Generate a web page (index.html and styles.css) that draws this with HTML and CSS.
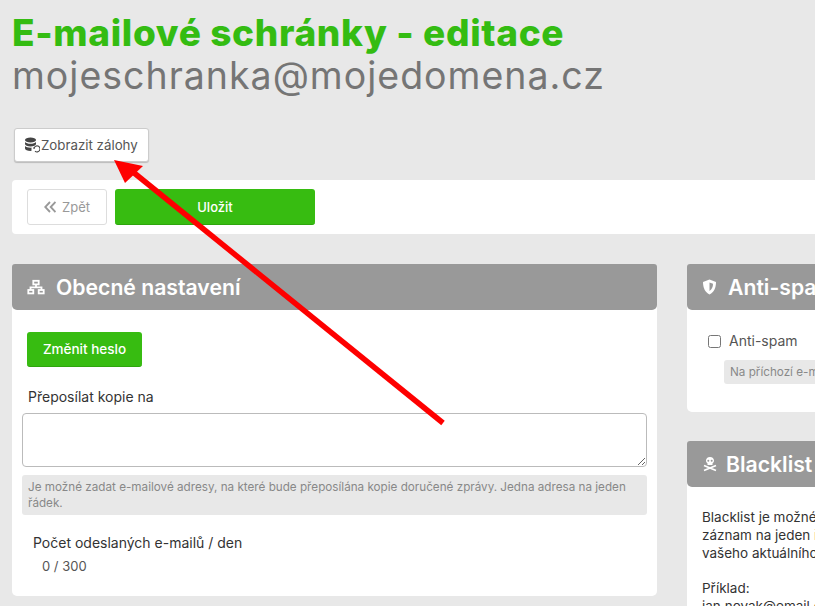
FILE: index.html
```html
<!DOCTYPE html>
<html lang="cs">
<head>
	<meta charset="UTF-8">
	<title>E-mailové schránky - editace</title>
	<link rel="stylesheet" href="styles.css">
</head>
<body>
	<div class="page">
		<h1 class="title">E-mailové schránky - editace</h1>
		<div class="subtitle">mojeschranka@mojedomena.cz</div>

		<div class="tools">
			<button class="btn-tool" type="button">
				<svg class="tool-icon" width="16" height="16" viewBox="0 0 16 16">
					<ellipse cx="6.5" cy="3" rx="5.5" ry="2.4" fill="#444"/>
					<path d="M1 5v2c0 1.3 2.5 2.4 5.5 2.4S12 8.300 12 7V5c-1 1.200-3 1.800-5.500 1.800S2 6.200 1 5z" fill="#444"/>
					<path d="M1 9v2.500c0 1.300 2.500 2.400 5.500 2.400l1-.1V10.600l-1 .1C4 10.700 2 10.200 1 9z" fill="#444"/>
					<path d="M10 11.500a3 3 0 1 1 1 2.700" fill="none" stroke="#444" stroke-width="1.100"/>
					<path d="M8.800 10.500l1.200 1.400 1.300-1.200z" fill="#444"/>
				</svg>
				Zobrazit zálohy
			</button>
		</div>

		<div class="action-bar">
			<button class="btn-back" type="button">
				<svg width="12" height="12" viewBox="0 0 12 12" fill="none" stroke="#999" stroke-width="1.900">
					<path d="M6 1L1.200 6 6 11M11.500 1L6.700 6l4.800 5"/>
				</svg>
				Zpět
			</button>
			<button class="btn-save" type="button">Uložit</button>
		</div>

		<div class="columns">
			<div class="card card-main">
				<div class="card-head">
					<svg width="18" height="16" viewBox="0 0 18 16" fill="none" stroke="#fff" stroke-width="1.800">
						<rect x="6.300" y="1.800" width="5.400" height="3.600"/>
						<path d="M9 5.400v3M3.500 11V8.400h11V11"/>
						<rect x="1.300" y="11" width="5" height="3.400"/>
						<rect x="11.700" y="11" width="5" height="3.400"/>
					</svg>
					<span>Obecné nastavení</span>
				</div>
				<div class="card-body">
					<button class="btn-green" type="button">Změnit heslo</button>
					<label class="field-label">Přeposílat kopie na</label>
					<textarea class="field-area"></textarea>
					<div class="hint">Je možné zadat e-mailové adresy, na které bude přeposílána kopie doručené zprávy. Jedna adresa na jeden řádek.</div>
					<div class="stat-label">Počet odeslaných e-mailů / den</div>
					<div class="stat-value">0 / 300</div>
				</div>
			</div>

			<div class="side">
				<div class="card card-spam">
					<div class="card-head">
						<svg width="15" height="16" viewBox="0 0 15 16">
							<path d="M7.500 .5L14 3c0 5.500-1.800 10-6.500 12.500C2.800 13 1 8.500 1 3z" fill="#fff"/>
							<path d="M7.500 3.500L11 4.800c0 3-1 5.500-3.500 7.200z" fill="#999"/>
						</svg>
						<span>Anti-spam</span>
					</div>
					<div class="card-body">
						<label class="check-row"><input type="checkbox"> Anti-spam</label>
						<div class="hint hint-side">Na příchozí e-maily bude uplatněna antispamová kontrola.</div>
					</div>
				</div>

				<div class="card">
					<div class="card-head head-tight">
						<svg width="16" height="16" viewBox="0 0 16 16" fill="#fff">
							<path d="M8 1C5.500 1 4 2.600 4 4.600c0 1.300.7 2.200 1.500 2.800V9h5V7.400c.8-.6 1.500-1.500 1.500-2.800C12 2.600 10.500 1 8 1z"/>
							<circle cx="6.300" cy="4.800" r="1" fill="#999"/>
							<circle cx="9.700" cy="4.800" r="1" fill="#999"/>
							<path d="M2 9.500l12 5M14 9.500l-12 5" stroke="#fff" stroke-width="1.700"/>
						</svg>
						<span>Blacklist</span>
					</div>
					<div class="card-body side-text">
						<p>Blacklist je možné zadat jako seznam adres,<br>záznam na jeden řádek. Adresy budou odmítnuty z<br>vašeho aktuálního nastavení.</p>
						<p>Příklad:<br>jan.novak@email.cz</p>
					</div>
				</div>
			</div>
		</div>
	</div>

	<!-- sipka pres obsah -->
	<svg class="arrow" width="815" height="606" viewBox="0 0 815 606">
		<path d="M443 423L133 172" stroke="#fe0000" stroke-width="5.500" fill="none"/>
		<path d="M114 160L143 166 125 183z" fill="#fe0000"/>
	</svg>
</body>
</html>
```

FILE: styles.css
```css
* {
	box-sizing: border-box;
}

html, body {
	margin: 0;
	height: 606px;
	overflow: hidden;
}

body {
	background-color: #e8e8e8;
	color: #333333;
	font-family: "Inter", "Liberation Sans", sans-serif;
	font-size: 13px;
	position: relative;
}

.page {
	width: 1320px;
	padding: 12px 0 0 12px;
}

.title {
	margin: 0;
	font-size: 37px;
	line-height: 42px;
	letter-spacing: 0.65px;
	font-weight: 800;
	color: #34bc12;
}

.subtitle {
	font-size: 37.500px;
	line-height: 44px;
	letter-spacing: 1px;
	color: #757575;
}

.tools {
	margin: 30px 0 18px 2px;
	height: 34px;
}

.btn-tool {
	display: flex;
	align-items: center;
	gap: 1px;
	width: 135px;
	height: 34px;
	padding: 0 0 0 9px;
	background-color: #ffffff;
	border: 1px solid #cccccc;
	border-radius: 3px;
	color: #555555;
	font-family: inherit;
	font-size: 13.300px;
	box-shadow: 0 1px 1px #bbbbbb;
}

.action-bar {
	display: flex;
	gap: 8px;
	height: 54px;
	padding: 9px 15px;
	background-color: #ffffff;
	border-radius: 4px;
}

.btn-back {
	display: flex;
	align-items: center;
	justify-content: center;
	gap: 6px;
	width: 80px;
	height: 36px;
	background-color: #ffffff;
	border: 1px solid #dddddd;
	border-radius: 3px;
	color: #999999;
	font-family: inherit;
	font-size: 13px;
}

.btn-save, .btn-green {
	height: 36px;
	background-color: #37bc11;
	border: none;
	border-bottom: 1px solid #2ea50d;
	border-radius: 3px;
	color: #ffffff;
	font-family: inherit;
	font-size: 13px;
	font-weight: 500;
}

.btn-save {
	width: 200px;
}

.btn-green {
	display: block;
	width: 115px;
	height: 35px;
	font-size: 13.500px;
}

.columns {
	display: grid;
	grid-template-columns: 645px 630px;
	gap: 30px;
	align-items: start;
	margin-top: 30px;
}

.side {
	display: flex;
	flex-direction: column;
	gap: 29px;
}

.card {
	background-color: #ffffff;
	border-radius: 5px;
}

.card-head {
	display: flex;
	align-items: center;
	gap: 11px;
	height: 46px;
	padding-left: 15px;
	background-color: #999999;
	border-radius: 3px 3px 5px 5px;
	color: #ffffff;
	font-size: 21.200px;
	font-weight: 600;
}

.head-tight {
	gap: 8px;
}

.card-main .card-body {
	padding: 22px 10px 20px 10px;
}

.card-main .btn-green {
	margin-left: 5px;
}

.field-label {
	display: block;
	margin: 20px 0 6px 6px;
	font-size: 14px;
	line-height: 20px;
}

.field-area {
	display: block;
	width: 625px;
	height: 54px;
	border: 1px solid #bbbbbb;
	border-radius: 4px;
	background-color: #ffffff;
}

.hint {
	margin-top: 8px;
	padding: 4px 6px;
	background-color: #e8e8e8;
	border-radius: 3px;
	color: #888888;
	font-size: 11.700px;
	line-height: 16px;
}

.stat-label {
	margin: 18px 0 0 11px;
	font-size: 14px;
	line-height: 20px;
}

.stat-value {
	margin: 3px 0 0 20px;
	font-size: 13px;
	line-height: 20px;
	color: #555555;
}

.card-spam .card-body {
	padding: 21px 20px 24px 21px;
	height: 102px;
}

.check-row {
	display: flex;
	align-items: center;
	gap: 8px;
	font-size: 14px;
	line-height: 20px;
	color: #555555;
}

.check-row input {
	width: 13px;
	height: 13px;
	margin: 0;
}

.hint-side {
	margin: 9px 0 0 16px;
	white-space: nowrap;
}

.side-text {
	padding: 21px 15px;
	font-size: 13.500px;
	line-height: 18px;
}

.side-text p {
	margin: 0 0 17px 0;
}

.arrow {
	position: absolute;
	left: 0;
	top: 0;
}
```
